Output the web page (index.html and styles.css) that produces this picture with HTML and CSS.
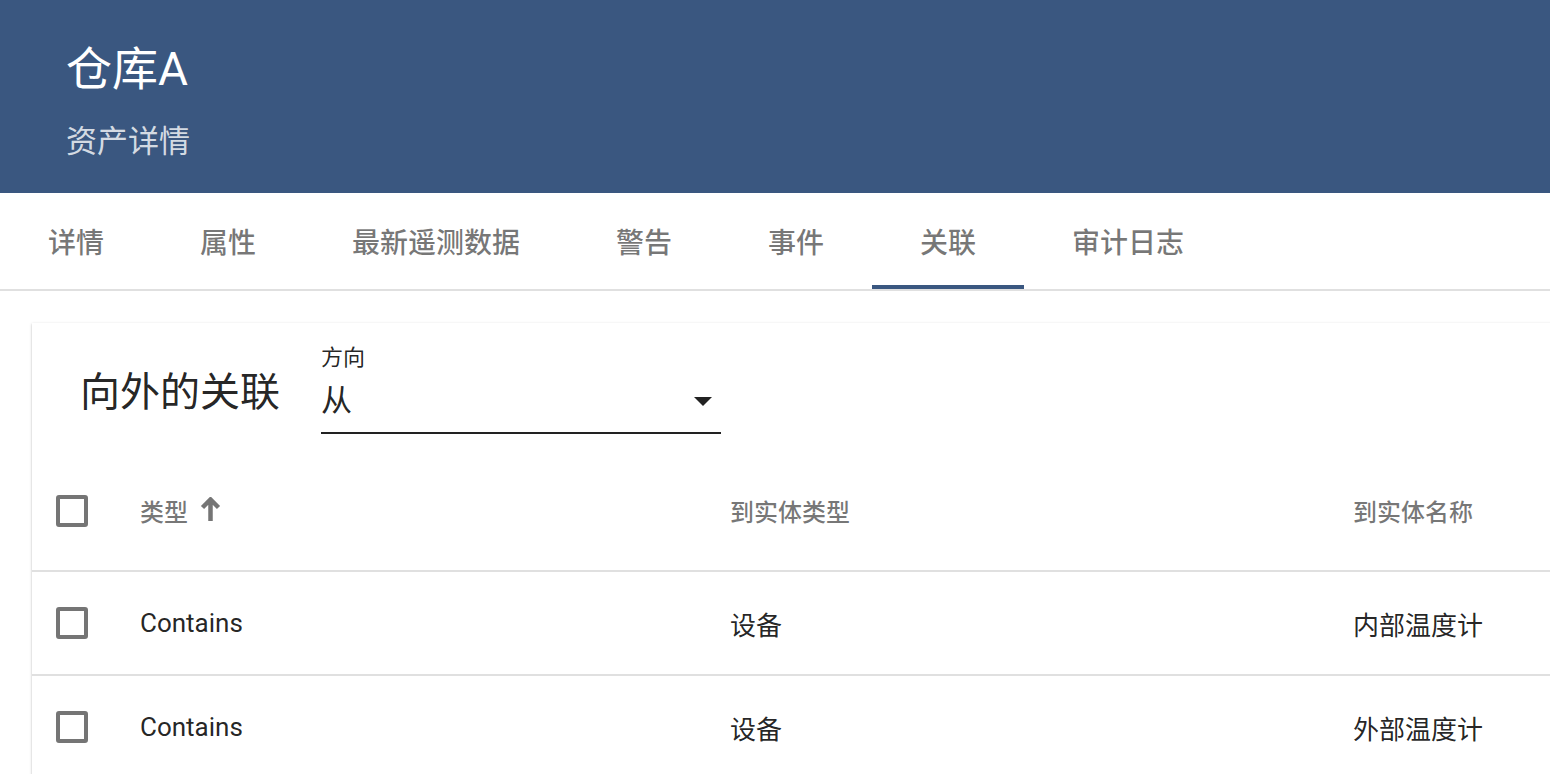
FILE: index.html
```html
<!DOCTYPE html>
<html lang="zh">
<head>
    <meta charset="UTF-8">
    <meta name="viewport" content="width=device-width, initial-scale=1.0">
    <title>仓库A - 资产详情</title>
    <link rel="stylesheet" href="styles.css">
</head>
<body>
    <header class="details-header">
        <div class="details-title">仓库A</div>
        <div class="details-subtitle">资产详情</div>
    </header>

    <nav class="tabs">
        <div class="tab">详情</div>
        <div class="tab">属性</div>
        <div class="tab">最新遥测数据</div>
        <div class="tab">警告</div>
        <div class="tab">事件</div>
        <div class="tab active">关联</div>
        <div class="tab">审计日志</div>
    </nav>

    <section class="card">
        <div class="toolbar">
            <div class="toolbar-title">向外的关联</div>
            <div class="select-field">
                <div class="select-label">方向</div>
                <div class="select-value">
                    <span>从</span>
                    <span class="select-arrow"></span>
                </div>
            </div>
        </div>

        <div class="table">
            <div class="row head">
                <div class="cell check"><span class="checkbox"></span></div>
                <div class="cell">类型
                    <svg class="sort-icon" viewBox="0 0 21 24"><path d="M2.5 10.5L10.5 2.5L18.5 10.5M10.5 3V24"/></svg>
                </div>
                <div class="cell">到实体类型</div>
                <div class="cell">到实体名称</div>
            </div>
            <div class="row">
                <div class="cell check"><span class="checkbox"></span></div>
                <div class="cell">Contains</div>
                <div class="cell">设备</div>
                <div class="cell">内部温度计</div>
            </div>
            <div class="row">
                <div class="cell check"><span class="checkbox"></span></div>
                <div class="cell">Contains</div>
                <div class="cell">设备</div>
                <div class="cell">外部温度计</div>
            </div>
        </div>
    </section>
</body>
</html>
```

FILE: styles.css
```css
body {
    margin: 0;
    font-family: Roboto, "Noto Sans CJK SC", sans-serif;
    color: rgba(0, 0, 0, 0.87);
    background: #fff;
    overflow: hidden;
}

.details-header {
    height: 193px;
    box-sizing: border-box;
    background: #3a5780;
    color: #fff;
    padding: 37px 66px 0;
}
.details-title {
    font-size: 46px;
    line-height: 64px;
}
.details-subtitle {
    margin-top: 21px;
    font-size: 31px;
    line-height: 40px;
    color: rgba(255, 255, 255, 0.8);
}

.tabs {
    display: flex;
    height: 96px;
    border-bottom: 2px solid #e0e0e0;
}
.tab {
    min-width: 152px;
    padding: 0 48px;
    box-sizing: border-box;
    display: flex;
    align-items: center;
    justify-content: center;
    font-size: 28px;
    font-weight: 500;
    color: rgba(0, 0, 0, 0.54);
}
.tab.active {
    border-bottom: 4px solid #3a5780;
    padding-top: 4px;
}

.card {
    margin: 32px 0 0 32px;
    width: 1700px;
    background: #fff;
    box-shadow: 0 1px 3px 0 rgba(0, 0, 0, 0.2), 0 1px 1px 0 rgba(0, 0, 0, 0.14);
}

.toolbar {
    height: 128px;
    display: flex;
    align-items: center;
    padding-left: 48px;
}
.toolbar-title {
    font-size: 40px;
    margin-right: 41px;
    margin-top: 4px;
}
.select-field {
    width: 400px;
    border-bottom: 2px solid #222;
    padding-bottom: 10px;
    margin-top: 4px;
}
.select-label {
    font-size: 22px;
    line-height: 28px;
}
.select-value {
    display: flex;
    align-items: center;
    justify-content: space-between;
    margin-top: 8px;
    font-size: 31px;
    line-height: 42px;
}
.select-arrow {
    width: 0;
    height: 0;
    border-left: 9px solid transparent;
    border-right: 9px solid transparent;
    border-top: 9px solid #222;
    margin-right: 9px;
}

.row {
    display: grid;
    grid-template-columns: 108px 590px 623px 1fr;
    height: 104px;
    border-bottom: 2px solid #e0e0e0;
    box-sizing: border-box;
    font-size: 26px;
}
.row.head {
    height: 121px;
    font-size: 24px;
    font-weight: 500;
    color: rgba(0, 0, 0, 0.54);
}
.cell {
    display: flex;
    align-items: center;
}
.cell.check {
    padding-left: 24px;
}
.checkbox {
    width: 32px;
    height: 32px;
    box-sizing: border-box;
    border: 4px solid #757575;
    border-radius: 3px;
}
.sort-icon {
    width: 21px;
    height: 24px;
    margin-left: 12px;
    margin-top: -4px;
    fill: none;
    stroke: #757575;
    stroke-width: 4.5;
}
```
